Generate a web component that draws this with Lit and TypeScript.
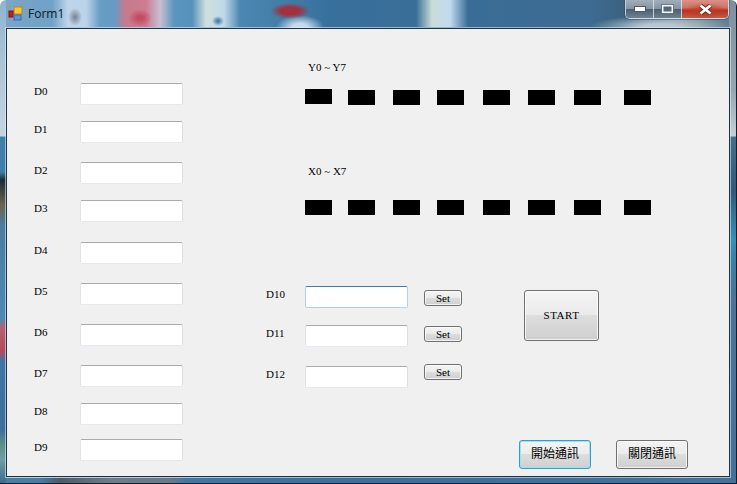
import { LitElement, html, css } from "lit";
import { customElement } from "lit/decorators.js";

const leftRows = [
  ["D0", 54], ["D1", 16], ["D2", 19], ["D3", 16], ["D4", 20],
  ["D5", 19], ["D6", 19], ["D7", 19], ["D8", 16], ["D9", 14],
] as const;
const ledGaps = [0, 16, 18, 17, 19, 18, 19, 23];
const midRows = [
  ["D10", 0, 4], ["D11", 17, 1], ["D12", 19, -2],
] as const;

@customElement("app-root")
export class AppRoot extends LitElement {
  static styles = css`
    :host { display: block; width: 737px; height: 484px; overflow: hidden; }
    .window {
      width: 737px; height: 484px; box-sizing: border-box; display: flex; flex-direction: column;
      border-radius: 6px 6px 0 0; overflow: hidden;
      box-shadow: inset -1px -1px 0 #10202e;
      background:
        linear-gradient(180deg, #8fb4cf 0, #a9c4d6 60px, #c3d6e0 136px, #3f80a8 137px, #3c7fa8 172px, #1e2a33 180px, #6a6450 205px, #4a7d9e 225px, #4a8bb4 318px, #b4616f 328px, #b64a5c 350px, #3f75a3 362px, #3d6f9a 430px, #5d9088 445px, #6f9ea0 460px, #386a92 484px) left top / 6px 100% no-repeat,
        linear-gradient(180deg, #7d8f9d 0, #96a6b1 90px, #c4cfd5 136px, #43708c 137px, #2f5a7c 190px, #3c8db4 240px, #3b7fa6 262px, #4a7499 300px, #44709a 484px) right top / 8px 100% no-repeat,
        linear-gradient(90deg, transparent 40px, #4d5b68 60px, #6e7c88 110px, #6b7a88 170px, transparent 186px) left 478px / 100% 6px no-repeat,
        linear-gradient(90deg, #4a7fa8, #3a6f9e 50%, #43739d) left 478px / 100% 6px no-repeat,
        radial-gradient(ellipse 20px 8px at 290px 11px, rgba(168,44,56,.95) 45%, transparent),
        radial-gradient(ellipse 24px 12px at 300px 27px, rgba(205,222,240,.95) 30%, transparent),
        radial-gradient(ellipse 6px 5px at 218px 21px, rgba(63,122,160,.9) 20%, transparent),
        radial-gradient(ellipse 7px 9px at 75px 17px, rgba(110,119,133,.8) 10%, transparent),
        radial-gradient(ellipse 12px 9px at 140px 18px, rgba(190,60,85,.75) 20%, transparent),
        linear-gradient(90deg, transparent 52px, #bed5ea 68px, #bcd4ea 86px, transparent 100px, transparent 114px, #c9798c 126px, #cd7d90 146px, #c7bfd2 160px, transparent 174px, transparent 192px, #cfe0dc 206px, #c0d9e8 224px, transparent 240px, transparent 416px, #c9dcd6 432px, #c2dbee 450px, transparent 468px) left top / 100% 27px no-repeat,
        radial-gradient(ellipse 70px 12px at 660px 27px, #b8c6cf 25%, transparent),
        linear-gradient(90deg, #7aa6c8 0, #6c9fc6 10%, #5d97c2 22%, #4f8cb6 30%, #38709c 45%, #3a6d95 65%, #3e6b92 80%, #3a617f 85%, #8095a5 92%, #5a7c93 100%);
    }
    .title { height: 28px; flex: none; display: flex; align-items: flex-start; }
    .icon { width: 16px; height: 16px; margin: 6px 0 0 8px; flex: none; }
    .name {
      font: 12px/16px "Open Sans", "Noto Sans", sans-serif; color: #0c1420;
      margin: 6px 0 0 4px; flex: 1;
    }
    .caption {
      display: flex; height: 19px; margin-right: 8px; box-sizing: border-box;
      border: 1px solid rgba(230,238,244,.8); border-top: none; border-radius: 0 0 5px 5px; overflow: hidden;
      box-shadow: 0 0 0 1px rgba(40,55,70,.35);
    }
    .cb { display: flex; align-items: center; justify-content: center; box-sizing: border-box; }
    .cb.min, .cb.max {
      width: 28px;
      background: linear-gradient(#a0aeb9 0, #8595a3 48%, #4e5f6f 52%, #6f8291 100%);
      border-right: 1px solid rgba(230,238,244,.75);
    }
    .cb.close {
      width: 46px;
      background: radial-gradient(ellipse 22px 8px at 50% 60%, #c23a20, transparent), linear-gradient(#dc9088 0, #cd7468 42%, #b8321c 58%, #bd5f4c 100%);
    }
    .cb svg { display: block; }
    .client {
      flex: none; height: 449px; margin: 0 7px 0 6px; box-sizing: border-box;
      background: #f0f0f0; border: 1px solid #1d3346;
      box-shadow: 0 0 0 1px rgba(235,242,248,.55);
      display: flex; font: 11px/17px "Liberation Serif", "Noto Sans CJK TC", serif; color: #000;
    }
    .left { width: 257px; flex: none; display: flex; flex-direction: column; }
    .row { display: flex; align-items: flex-start; height: 22px; }
    .left .lab { margin-left: 27px; width: 46px; }
    .mid .lab { margin-left: 2px; width: 39px; }
    .lab { flex: none; }
    .tb {
      width: 103px; height: 22px; flex: none; box-sizing: border-box; background: #fff;
      border: 1px solid #e3e9ef; border-left-color: #e2e3ea; border-right-color: #dbdfe6;
      border-top-color: #ababab; border-radius: 2px;
    }
    .tb.focus { border-color: #b5cfe7; border-top-color: #3d7bad; }
    .center { flex: 1; display: flex; flex-direction: column; }
    .cap { margin: 30px 0 0 44px; height: 17px; }
    .cap.second { margin-top: 58px; }
    .leds { display: flex; margin: 13px 0 0 41px; height: 16px; }
    .leds.low { margin-top: 19px; }
    .led { width: 27px; height: 15px; background: #000; flex: none; margin-top: 1px; }
    .led.first { margin-top: 0; }
    .lower { display: flex; margin-top: 71px; height: 130px; }
    .mid { width: 260px; flex: none; display: flex; flex-direction: column; }
    .btn {
      box-sizing: border-box; font: inherit; color: #000; padding: 0; flex: none;
      border: 1px solid #707070; border-radius: 3px;
      background: linear-gradient(#f4f4f4 0, #ebebeb 48%, #dddddd 50%, #cfcfcf 100%);
      box-shadow: inset 0 0 0 1px rgba(255,255,255,.75);
      display: flex; align-items: center; justify-content: center;
    }
    .set { width: 38px; height: 16px; margin-left: 16px; line-height: 14px; }
    .start { width: 75px; height: 51px; margin-top: 4px; letter-spacing: .5px; }
    .bottom { display: flex; margin: 24px 0 0 255px; }
    .wide { width: 72px; height: 29px; font-size: 12px; }
    .wide.on { border-color: #2d9fd0; box-shadow: inset 0 0 0 1px #9fe0f5; }
    .wide + .wide { margin-left: 25px; }
  `;

  private leds(low: boolean) {
    return html`<div class="leds ${low ? "low" : ""}">
      ${ledGaps.map((g, i) => html`<div
        class="led ${i === 0 && !low ? "first" : ""}"
        style="margin-left:${g}px"></div>`)}
    </div>`;
  }

  render() {
    return html`<div class="window">
      <div class="title">
        <svg class="icon" viewBox="0 0 16 16">
          <rect x="0.5" y="0.5" width="13" height="13" fill="none" stroke="#9a9a9a" stroke-opacity=".7"/>
          <path d="M4.5 0v14M0 4.5h14M9.5 0v14M0 9.5h14" stroke="#a8a8a8" stroke-opacity=".6"/>
          <rect x="6" y="1" width="8" height="7" fill="#f6c636" stroke="#b98a10"/>
          <rect x="1" y="5" width="4" height="6" fill="#c8201c" stroke="#7c1210"/>
          <rect x="6" y="9" width="7" height="5" fill="#5a92dc" stroke="#3d6cb0"/>
        </svg>
        <div class="name">Form1</div>
        <div class="caption">
          <div class="cb min"><svg width="12" height="6" viewBox="0 0 12 6"><rect x=".5" y=".5" width="11" height="5" fill="#fff" stroke="#46586a"/></svg></div>
          <div class="cb max"><svg width="13" height="10" viewBox="0 0 13 10"><rect x="1.5" y="1.5" width="10" height="7" fill="#55677a" stroke="#f4f6f8" stroke-width="2"/><rect x=".5" y=".5" width="12" height="9" fill="none" stroke="#46586a" stroke-opacity=".7"/></svg></div>
          <div class="cb close"><svg width="15" height="11" viewBox="0 0 15 11"><path d="M2.5 1.5 L12.5 9.5 M12.5 1.5 L2.5 9.5" stroke="#5e2a24" stroke-width="4.4"/><path d="M2.5 1.5 L12.5 9.5 M12.5 1.5 L2.5 9.5" stroke="#fff" stroke-width="2.8"/></svg></div>
        </div>
      </div>
      <div class="client">
        <div class="left">
          ${leftRows.map(([t, m]) => html`<div class="row" style="margin-top:${m}px">
            <span class="lab">${t}</span><div class="tb"></div>
          </div>`)}
        </div>
        <div class="center">
          <div class="cap">Y0 ~ Y7</div>
          ${this.leds(false)}
          <div class="cap second">X0 ~ X7</div>
          ${this.leds(true)}
          <div class="lower">
            <div class="mid">
              ${midRows.map(([t, m, s], i) => html`<div class="row" style="margin-top:${m}px">
                <span class="lab">${t}</span><div class="tb ${i === 0 ? "focus" : ""}"></div>
                <button class="btn set" style="margin-top:${s}px">Set</button>
              </div>`)}
            </div>
            <button class="btn start">START</button>
          </div>
          <div class="bottom">
            <button class="btn wide on">開始通訊</button>
            <button class="btn wide">關閉通訊</button>
          </div>
        </div>
      </div>
    </div>`;
  }
}
